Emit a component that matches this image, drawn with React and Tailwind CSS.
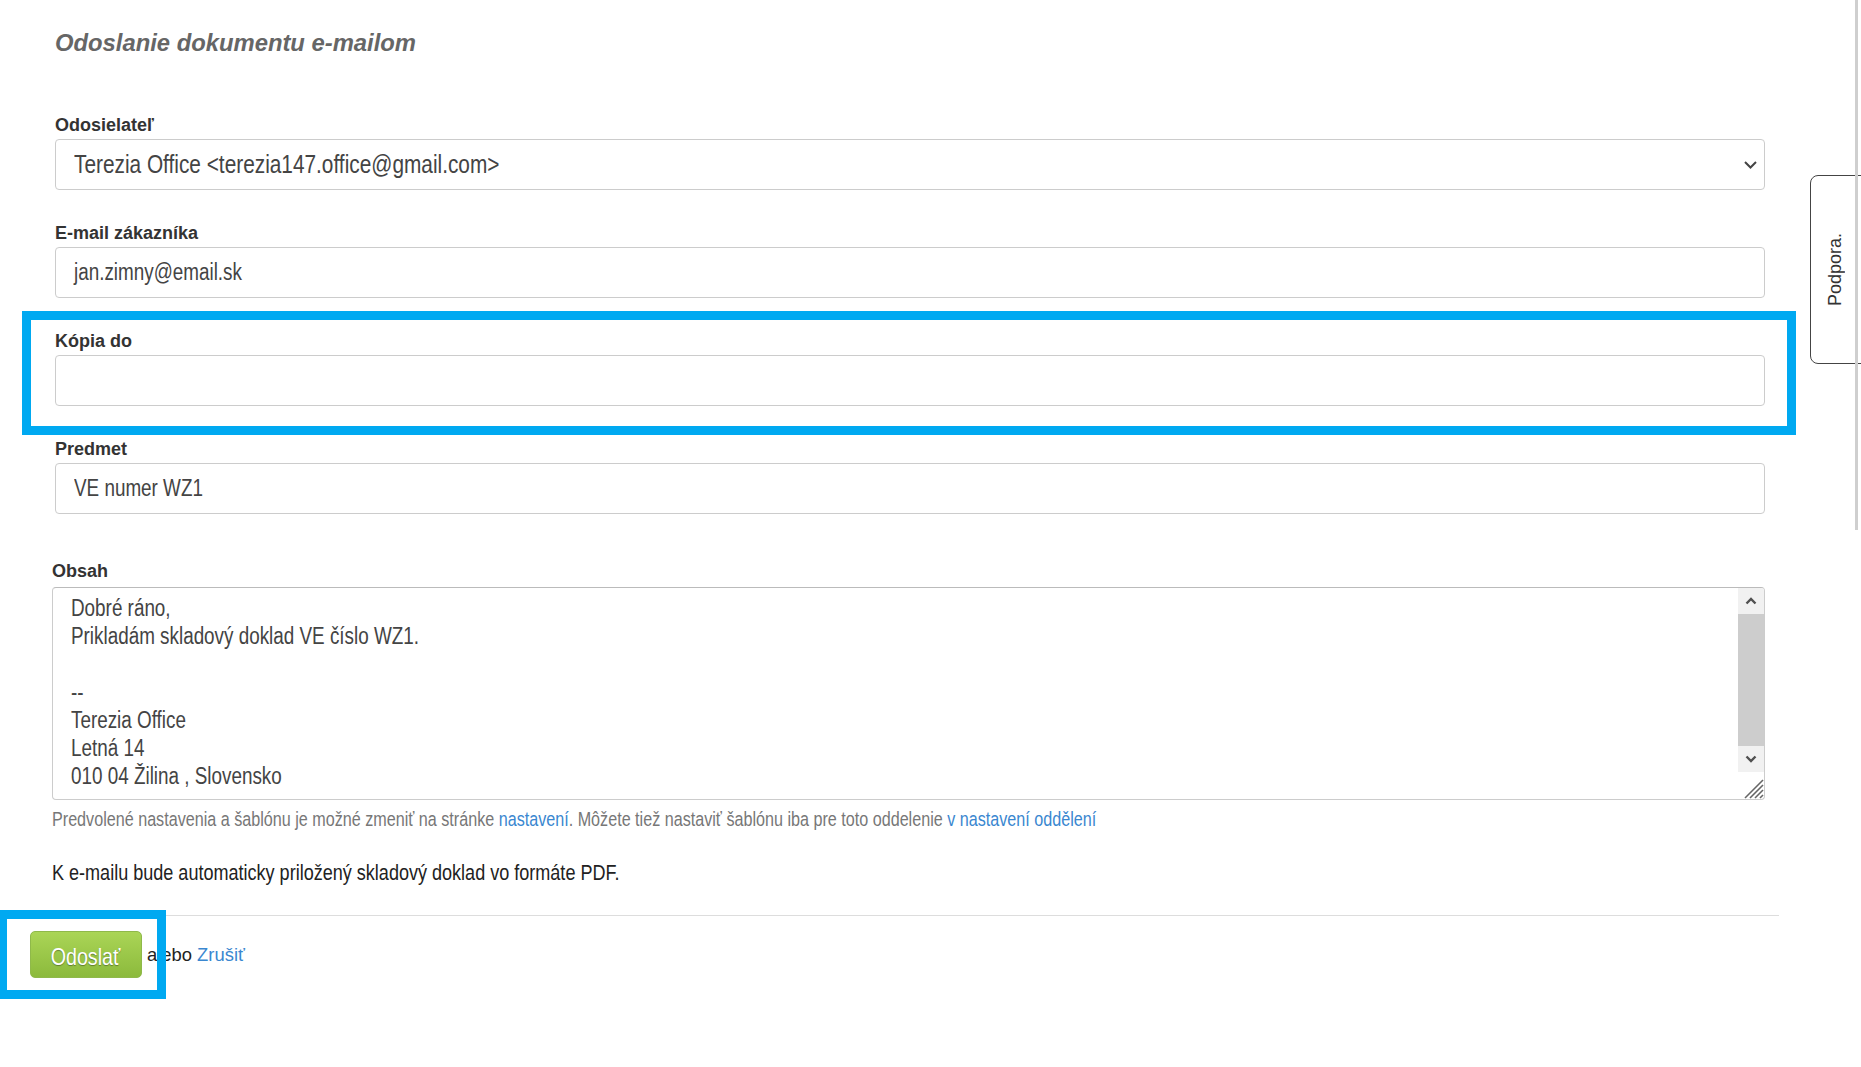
import React from 'react';

// úzke písmo (Arial Narrow) – stlačené Liberation Sans
const Narrow = ({ className = '', children }) => (
    <span className={`inline-block origin-left scale-x-[0.82] whitespace-nowrap ${className}`}>{children}</span>
);

// Popisok + pole formulára
const Field = ({ label, className = '', children }) => (
    <div className={className}>
        <div className="text-[18px] leading-[22px] font-bold text-[#333] mb-[3px]">{label}</div>
        {children}
    </div>
);

const Input = ({ value }) => (
    <div className="h-[51px] border border-[#ccc] rounded-[4px] px-[18px] flex items-center text-[23px] text-[#444]">
        <Narrow>{value}</Narrow>
    </div>
);

const Chevron = ({ up }) => (
    <svg width="12" height="8" viewBox="0 0 12 8" className={up ? 'rotate-180' : ''}>
        <polyline points="1.5,1.5 6,6 10.5,1.5" fill="none" stroke="#505050" strokeWidth="2.4" />
    </svg>
);

const lines = [
    'Dobré ráno,',
    'Prikladám skladový doklad VE číslo WZ1.',
    '\u00a0',
    '--',
    'Terezia Office',
    'Letná 14',
    '010 04 Žilina , Slovensko',
];

export default function App() {
    return (
        <div className="relative min-h-screen bg-white font-['Liberation_Sans',Arial,sans-serif] text-[#333] overflow-hidden">
            <div className="pl-[55px] pt-[29px] w-[1765px]">
                <h1 className="text-[23.8px] leading-[28px] font-bold italic text-[#666]">Odoslanie dokumentu e-mailom</h1>

                <Field label="Odosielateľ" className="mt-[57px]">
                    <div className="h-[51px] border border-[#ccc] rounded-[4px] pl-[18px] pr-[7px] flex items-center justify-between text-[25.4px] text-[#444]">
                        <Narrow>Terezia Office &lt;terezia147.office@gmail.com&gt;</Narrow>
                        <svg width="13" height="8" viewBox="0 0 13 8">
                            <polyline points="1,1 6.5,6.5 12,1" fill="none" stroke="#444" strokeWidth="2" />
                        </svg>
                    </div>
                </Field>

                <Field label="E-mail zákazníka" className="mt-[32px]">
                    <Input value="jan.zimny@email.sk" />
                </Field>

                <Field label="Kópia do" className="mt-[32px]">
                    <Input value="" />
                </Field>

                <Field label="Predmet" className="mt-[32px]">
                    <Input value="VE numer WZ1" />
                </Field>

                <div className="-ml-[3px] mt-[46px]">
                    <div className="text-[18px] leading-[22px] font-bold text-[#333] mb-[5px]">Obsah</div>
                    <div className="h-[213px] border border-[#ccc] border-t-[#bbb] rounded-[4px] flex overflow-hidden">
                        <div className="flex-1 pl-[18px] pt-[6px] text-[23px] leading-[28px] text-[#444]">
                            {lines.map((l, i) => <div key={i}><Narrow>{l}</Narrow></div>)}
                        </div>
                        <div className="w-[26px] flex flex-col">
                            <div className="h-[26px] bg-[#f1f1f1] flex items-center justify-center"><Chevron up /></div>
                            <div className="h-[132px] bg-[#cdcdcd]"></div>
                            <div className="h-[26px] bg-[#f1f1f1] flex items-center justify-center"><Chevron /></div>
                            <div className="flex-1 flex items-end justify-end">
                                <svg width="22" height="22" viewBox="0 0 22 22">
                                    <line x1="21" y1="3" x2="3" y2="21" stroke="#666" strokeWidth="1.6" />
                                    <line x1="21" y1="8" x2="8" y2="21" stroke="#666" strokeWidth="1.6" />
                                    <line x1="21" y1="13" x2="13" y2="21" stroke="#666" strokeWidth="1.6" />
                                    <line x1="21" y1="18" x2="18" y2="21" stroke="#666" strokeWidth="1.6" />
                                </svg>
                            </div>
                        </div>
                    </div>

                    <p className="mt-[8px] text-[19.7px] leading-[22px] text-[#777]">
                        <Narrow>
                            Predvolené nastavenia a šablónu je možné zmeniť na stránke <span className="text-[#3a87d0]">nastavení</span>. Môžete tiež nastaviť šablónu iba pre toto oddelenie <span className="text-[#3a87d0]">v nastavení oddělení</span>
                        </Narrow>
                    </p>

                    <p className="mt-[30px] text-[22px] leading-[26px] text-[#222]">
                        <Narrow>K e-mailu bude automaticky priložený skladový doklad vo formáte PDF.</Narrow>
                    </p>
                </div>
            </div>

            <div className="ml-[40px] mt-[29px] w-[1739px] h-px bg-[#ddd]"></div>

            <div className="flex items-center pl-[30px] mt-[15px]">
                <button className="w-[112px] h-[47px] pt-[4px] rounded-[5px] border border-[#8fb94a] bg-gradient-to-b from-[#aad556] to-[#8cba3c] text-white text-[24px] flex items-center justify-center [text-shadow:0_1px_1px_rgba(0,0,0,0.35)]">
                    <span className="inline-block scale-x-[0.82]">Odoslať</span>
                </button>
                <span className="ml-[5px] text-[18.4px] text-[#222]">alebo <span className="text-[#3a87d0]">Zrušiť</span></span>
            </div>

            {/* zvýraznenia */}
            <div className="absolute left-[22px] top-[311px] w-[1774px] h-[124px] border-[9px] border-[#00a9f1]"></div>
            <div className="absolute left-[-2px] top-[910px] w-[168px] h-[89px] border-[9px] border-[#00a9f1]"></div>

            {/* Podpora */}
            <div className="absolute left-[1810px] top-[175px] w-[52px] h-[189px] border border-[#444] rounded-l-[8px] bg-white flex items-center pl-[11px]">
                <span className="[writing-mode:vertical-rl] rotate-180 text-[18px] text-[#333]">Podpora.</span>
            </div>
            <div className="absolute right-[3px] top-0 w-[3px] h-[530px] bg-[#cfcfcf]"></div>
        </div>
    );
}
